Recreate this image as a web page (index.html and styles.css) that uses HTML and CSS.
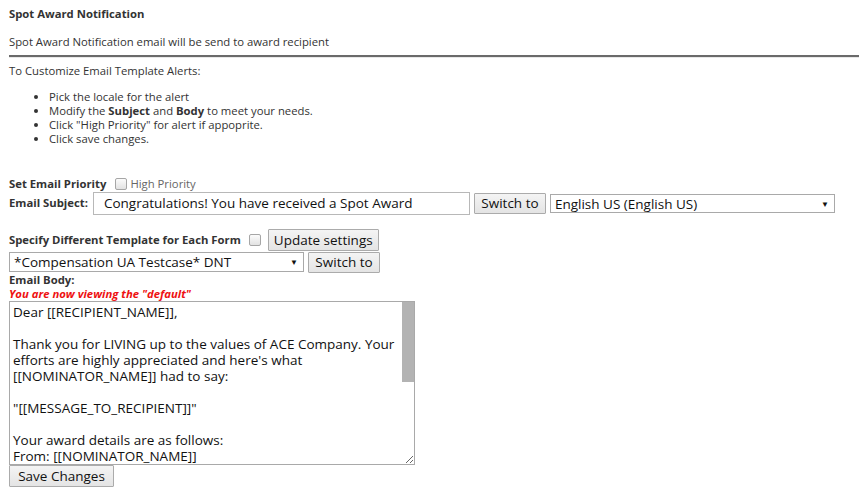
FILE: index.html
```html
<!DOCTYPE html>
<html>
<head>
<meta charset="utf-8">
<link rel="stylesheet" href="styles.css">
</head>
<body>
<div class="page">
  <div class="title">Spot Award Notification</div>
  <div class="subtitle">Spot Award Notification email will be send to award recipient</div>
  <div class="rule"></div>
  <div class="intro">To Customize Email Template Alerts:</div>
  <ul class="steps">
    <li>Pick the locale for the alert</li>
    <li>Modify the <b>Subject</b> and <b>Body</b> to meet your needs.</li>
    <li>Click "High Priority" for alert if appoprite.</li>
    <li>Click save changes.</li>
  </ul>
  <div class="row priority">
    <span class="label">Set Email Priority</span>
    <input type="checkbox" class="check">
    <span class="check-label">High Priority</span>
  </div>
  <div class="row subject">
    <span class="label">Email Subject:</span>
    <input type="text" class="text-input" value="Congratulations! You have received a Spot Award">
    <button class="btn btn-switch">Switch to</button>
    <span class="select-wrap locale"><select class="select"><option>English US (English US)</option></select></span>
  </div>
  <div class="row specify">
    <span class="label">Specify Different Template for Each Form</span>
    <input type="checkbox" class="check check2">
    <button class="btn btn-update">Update settings</button>
  </div>
  <div class="row template">
    <span class="select-wrap form"><select class="select"><option>*Compensation UA Testcase* DNT</option></select></span>
    <button class="btn btn-switch">Switch to</button>
  </div>
  <div class="label body-label">Email Body:</div>
  <div class="notice">You are now viewing the "default"</div>
  <div class="body-box">
    <textarea class="body-text">Dear [[RECIPIENT_NAME]],

Thank you for LIVING up to the values of ACE Company. Your efforts are highly appreciated and here's what [[NOMINATOR_NAME]] had to say:

"[[MESSAGE_TO_RECIPIENT]]"

Your award details are as follows:
From: [[NOMINATOR_NAME]]
Award: [[AWARD_NAME]]
Amount: [[AWARD_AMOUNT]]
Date: [[AWARD_DATE]]

Congratulations on this well deserved recognition.

Thank you,
[[COMPANY_NAME]]
</textarea>
    <div class="scroll-thumb"></div>
  </div>
  <div class="save-row"><button class="btn btn-save">Save Changes</button></div>
</div>
</body>
</html>
```
FILE: styles.css
```css
html, body {
  margin: 0;
  padding: 0;
  background: #ffffff;
}
.page {
  padding: 0 9px;
  font-family: "Open Sans", "Noto Sans", sans-serif;
  font-size: 11.3px;
  line-height: 14px;
  color: #333333;
}
.title {
  margin-top: 7px;
  font-weight: bold;
}
.subtitle {
  margin-top: 14px;
}
.rule {
  margin: 6px -9px 0 0;
  height: 0;
  border-top: 2px solid #6a6a6a;
  border-bottom: 1px solid #e8e8e8;
}
.intro {
  margin-top: 6px;
}
.steps {
  margin: 12px 0 0 0;
  padding-left: 40px;
}
.steps li {
  line-height: 14px;
}
.row {
  display: flex;
  align-items: center;
}
.label {
  font-weight: bold;
  color: #333333;
  white-space: nowrap;
}
.priority {
  margin-top: 30px;
  height: 15px;
}
.check {
  -webkit-appearance: none;
  appearance: none;
  box-sizing: border-box;
  width: 12px;
  height: 12px;
  margin: 0 3px 0 9px;
  border: 1px solid #a6a6a6;
  border-radius: 2px;
  background: linear-gradient(#fbfbfb, #e2e2e2);
}
.check-label {
  color: #666666;
}
.subject {
  height: 24px;
}
.text-input {
  box-sizing: border-box;
  width: 377px;
  height: 23px;
  margin: 0 0 0 5px;
  padding: 0 10px;
  border: 1px solid #b8b8b8;
  font-family: "Open Sans", "Noto Sans", sans-serif;
  font-size: 13.5px;
  color: #111111;
}
.btn {
  box-sizing: border-box;
  height: 21px;
  padding: 0 4px;
  border: 1px solid #ababab;
  border-radius: 1px;
  background: linear-gradient(#f4f4f4, #e4e4e4);
  font-family: "Open Sans", "Noto Sans", sans-serif;
  font-size: 13.5px;
  color: #111111;
  line-height: 19px;
  white-space: nowrap;
}
.btn-switch {
  width: 72px;
  margin-left: 4px;
}
.select-wrap {
  position: relative;
  display: inline-block;
}
.select-wrap::after {
  content: "\25BC";
  position: absolute;
  right: 6px;
  top: 5px;
  font-size: 8px;
  line-height: 10px;
  color: #111111;
  pointer-events: none;
}
.select {
  box-sizing: border-box;
  height: 19px;
  -webkit-appearance: none;
  appearance: none;
  border: 1px solid #a9a9a9;
  border-radius: 0;
  background: #ffffff;
  padding: 0 4px;
  font-family: "Open Sans", "Noto Sans", sans-serif;
  font-size: 13.5px;
  color: #111111;
  display: block;
}
.locale {
  margin-left: 4px;
}
.locale .select {
  width: 285px;
}
.specify {
  margin-top: 14px;
  height: 22px;
}
.check2 {
  margin: 0 7px 0 8px;
}
.btn-update {
  height: 22px;
  width: 111px;
}
.template {
  margin-top: 1px;
  height: 20px;
}
.form .select {
  width: 295px;
  height: 20px;
}
.template .btn-switch {
  height: 21px;
}
.body-label {
  margin-top: 1px;
}
.notice {
  color: #ee1111;
  font-weight: bold;
  font-style: italic;
}
.body-box {
  position: relative;
  width: 406px;
  height: 164px;
}
.body-text {
  display: block;
  box-sizing: border-box;
  width: 406px;
  height: 164px;
  margin: 0;
  padding: 2px 16px 2px 3px;
  border: 1px solid #a9a9a9;
  font-family: "Open Sans", "Noto Sans", sans-serif;
  font-size: 13.5px;
  line-height: 16px;
  color: #111111;
  overflow: hidden;
  resize: both;
}
.scroll-thumb {
  position: absolute;
  top: 1px;
  right: 1px;
  width: 12px;
  height: 80px;
  background: #b3b3b3;
}
.save-row {
  margin-top: 0;
}
.btn-save {
  width: 105px;
  height: 22px;
}
```
